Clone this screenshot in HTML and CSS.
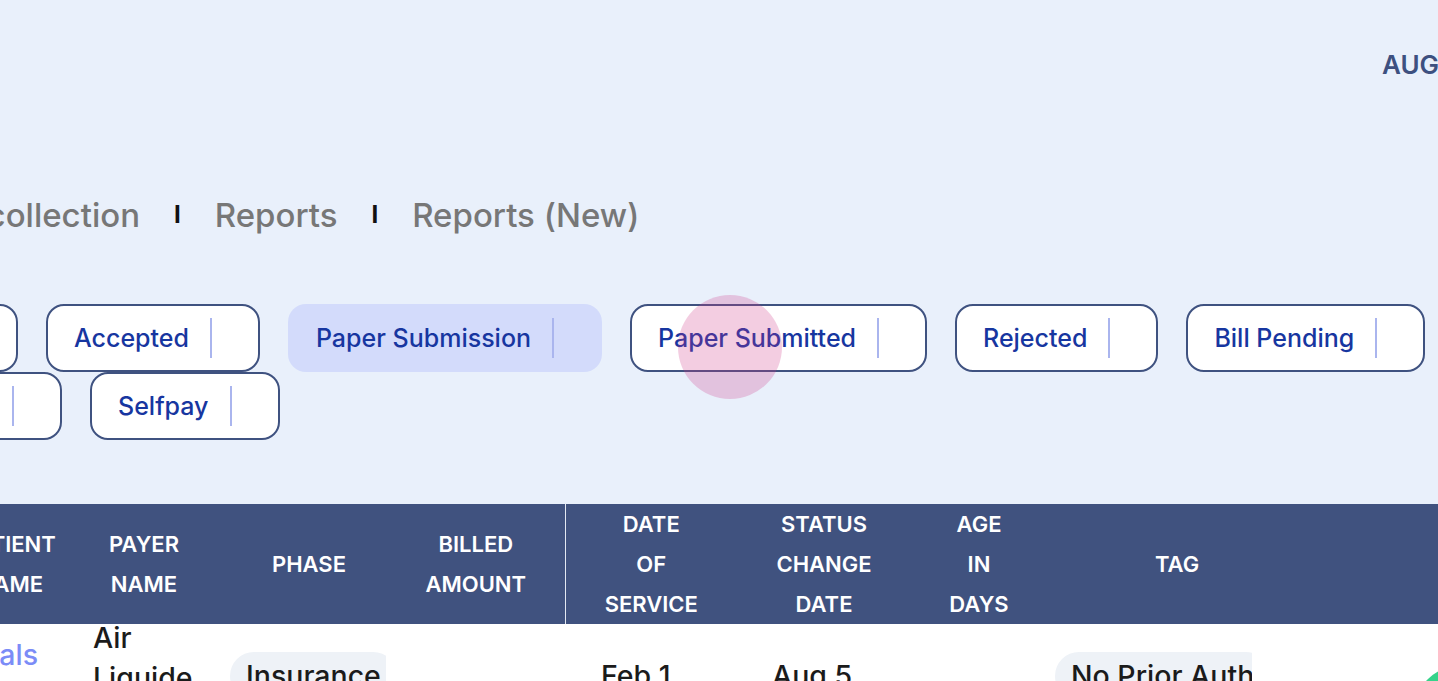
FILE: index.html
```html
<!DOCTYPE html>
<html lang="en">
<head>
<meta charset="utf-8">
<title>Claims</title>
<link rel="stylesheet" href="styles.css">
</head>
<body>
<div class="page">
  <header class="topbar">
    <div class="date-clip"><span class="date">AUG 05, 2024</span></div>
  </header>

  <nav class="tabs">
    <div class="tab-clip"><a class="tab">Payment collection</a></div>
    <span class="sep">I</span>
    <a class="tab">Reports</a>
    <span class="sep">I</span>
    <a class="tab">Reports (New)</a>
  </nav>

  <section class="filters">
    <div class="filter-row">
      <div class="pill-clip clip-a"><button class="pill">Submitted</button></div>
      <button class="pill">Accepted</button>
      <button class="pill active">Paper Submission</button>
      <button class="pill">Paper Submitted<span class="ripple"></span></button>
      <button class="pill">Rejected</button>
      <button class="pill">Bill Pending</button>
    </div>
    <div class="filter-row">
      <div class="pill-clip clip-b"><button class="pill">Denied</button></div>
      <button class="pill">Selfpay</button>
    </div>
  </section>

  <table class="grid">
    <colgroup>
      <col class="c-patient">
      <col class="c-payer">
      <col class="c-phase">
      <col class="c-billed">
      <col class="c-dos">
      <col class="c-status">
      <col class="c-age">
      <col class="c-tag">
      <col class="c-action">
    </colgroup>
    <thead>
      <tr>
        <th>Patient<br>Name</th>
        <th>Payer<br>Name</th>
        <th>Phase</th>
        <th class="th-billed">Billed<br>Amount</th>
        <th class="th-divider">Date<br>of<br>Service</th>
        <th>Status<br>Change<br>Date</th>
        <th>Age<br>in<br>Days</th>
        <th>Tag</th>
        <th></th>
      </tr>
    </thead>
    <tbody>
      <tr>
        <td class="td-patient"><div class="patient"><a class="link">Medicals</a></div></td>
        <td class="td-payer"><div class="payer">Air Liquide Healthcare</div></td>
        <td class="td-phase"><div class="chip-clip"><span class="chip">Insurance</span></div></td>
        <td class="td-billed"></td>
        <td class="td-date">Feb 1,<br>2024</td>
        <td class="td-date td-status">Aug 5,<br>2024</td>
        <td class="td-age"></td>
        <td class="td-tag"><div class="chip-clip"><span class="chip">No Prior Auth</span></div></td>
        <td class="td-action"><span class="status-dot"></span></td>
      </tr>
    </tbody>
  </table>
</div>
</body>
</html>
```
FILE: styles.css
```css
* { box-sizing: border-box; }

html, body {
  margin: 0;
  overflow: hidden;
}

body {
  width: 1438px;
  height: 681px;
  background: #e9f0fb;
  font-family: Inter, "Noto Sans", sans-serif;
}

.page {
  width: 1438px;
  height: 681px;
  overflow: hidden;
}

/* top bar */
.topbar {
  height: 195px;
  padding-top: 48px;
  display: flex;
  justify-content: flex-end;
  align-items: flex-start;
}

.date-clip {
  width: 56px;
  overflow: hidden;
  display: flex;
}

.date {
  white-space: nowrap;
  font-size: 26px;
  font-weight: 600;
  line-height: 34px;
  color: #3d5080;
}

/* tabs */
.tabs {
  display: flex;
  align-items: center;
  gap: 34px;
  height: 40px;
  font-size: 33px;
  font-weight: 500;
  line-height: 40px;
}

.tab-clip {
  width: 140px;
  flex: none;
  overflow: hidden;
  display: flex;
  justify-content: flex-end;
}

.tab {
  white-space: nowrap;
  color: #777777;
  text-decoration: none;
}

.sep {
  font-size: 24px;
  font-weight: 700;
  color: #111111;
}

/* filter pills */
.filters {
  margin-top: 69px;
  display: flex;
  flex-direction: column;
}

.filter-row {
  display: flex;
  gap: 28px;
  height: 68px;
}

.pill-clip {
  flex: none;
  overflow: hidden;
  display: flex;
  justify-content: flex-end;
}

.clip-a { width: 18px; }
.clip-b { width: 62px; }

.pill {
  position: relative;
  flex: none;
  height: 68px;
  display: inline-flex;
  align-items: center;
  gap: 21px;
  padding: 0 46px 0 26px;
  border: 2px solid #3f5280;
  border-radius: 18px;
  background: #ffffff;
  font-family: Inter, "Noto Sans", sans-serif;
  font-size: 25px;
  font-weight: 500;
  color: #1736a0;
  white-space: nowrap;
  cursor: pointer;
}

.pill::after {
  content: "";
  width: 2px;
  height: 40px;
  background: #aab5ee;
}

.pill.active {
  background: #d3dbfb;
  border-color: transparent;
}

.ripple {
  position: absolute;
  left: 46px;
  top: -11px;
  width: 104px;
  height: 104px;
  border-radius: 50%;
  background: rgba(208, 56, 136, 0.25);
  pointer-events: none;
}

/* table */
.grid {
  margin-top: 64px;
  margin-left: -56px;
  border-collapse: collapse;
  table-layout: fixed;
  width: 1854px;
}

.c-patient { width: 132px; }
.c-payer { width: 136px; }
.c-phase { width: 194px; }
.c-billed { width: 159px; }
.c-dos { width: 172px; }
.c-status { width: 174px; }
.c-age { width: 136px; }
.c-tag { width: 260px; }
.c-action { width: 491px; }

.grid th {
  height: 120px;
  padding: 0;
  background: #40527f;
  color: #ffffff;
  font-size: 22px;
  font-weight: 600;
  line-height: 40px;
  text-transform: uppercase;
  text-align: center;
  vertical-align: middle;
}

.grid th.th-billed { padding-right: 19px; }

.grid th.th-divider { border-left: 1px solid #e3e8f2; }

.grid td {
  padding: 0;
  vertical-align: top;
  background: #ffffff;
  font-size: 28.5px;
  font-weight: 500;
  line-height: 40px;
  color: #1b1b1b;
  height: 160px;
}

.grid td.td-patient { padding: 11px 38px 0 0; }

.patient {
  display: flex;
  justify-content: flex-end;
}

.link {
  color: #7b8cf7;
  white-space: nowrap;
}

.grid td.td-payer { padding: 0 4px 0 17px; }

.payer { margin-top: -6px; }

.grid td.td-phase { padding: 28px 20px 0 18px; }

.grid td.td-tag { padding: 28px 55px 0 8px; }

.chip-clip { overflow: hidden; }

.chip {
  display: inline-block;
  height: 48px;
  line-height: 48px;
  padding: 0 16px;
  border-radius: 24px;
  background: #eef2f7;
  white-space: nowrap;
}

.grid td.td-date { padding: 32px 0 0 36px; }
.grid td.td-status { padding-left: 35px; }

.grid td.td-action { padding: 42px 0 0 107px; }

.status-dot {
  display: block;
  width: 92px;
  height: 92px;
  border-radius: 50%;
  background: #35d38a;
}
```
